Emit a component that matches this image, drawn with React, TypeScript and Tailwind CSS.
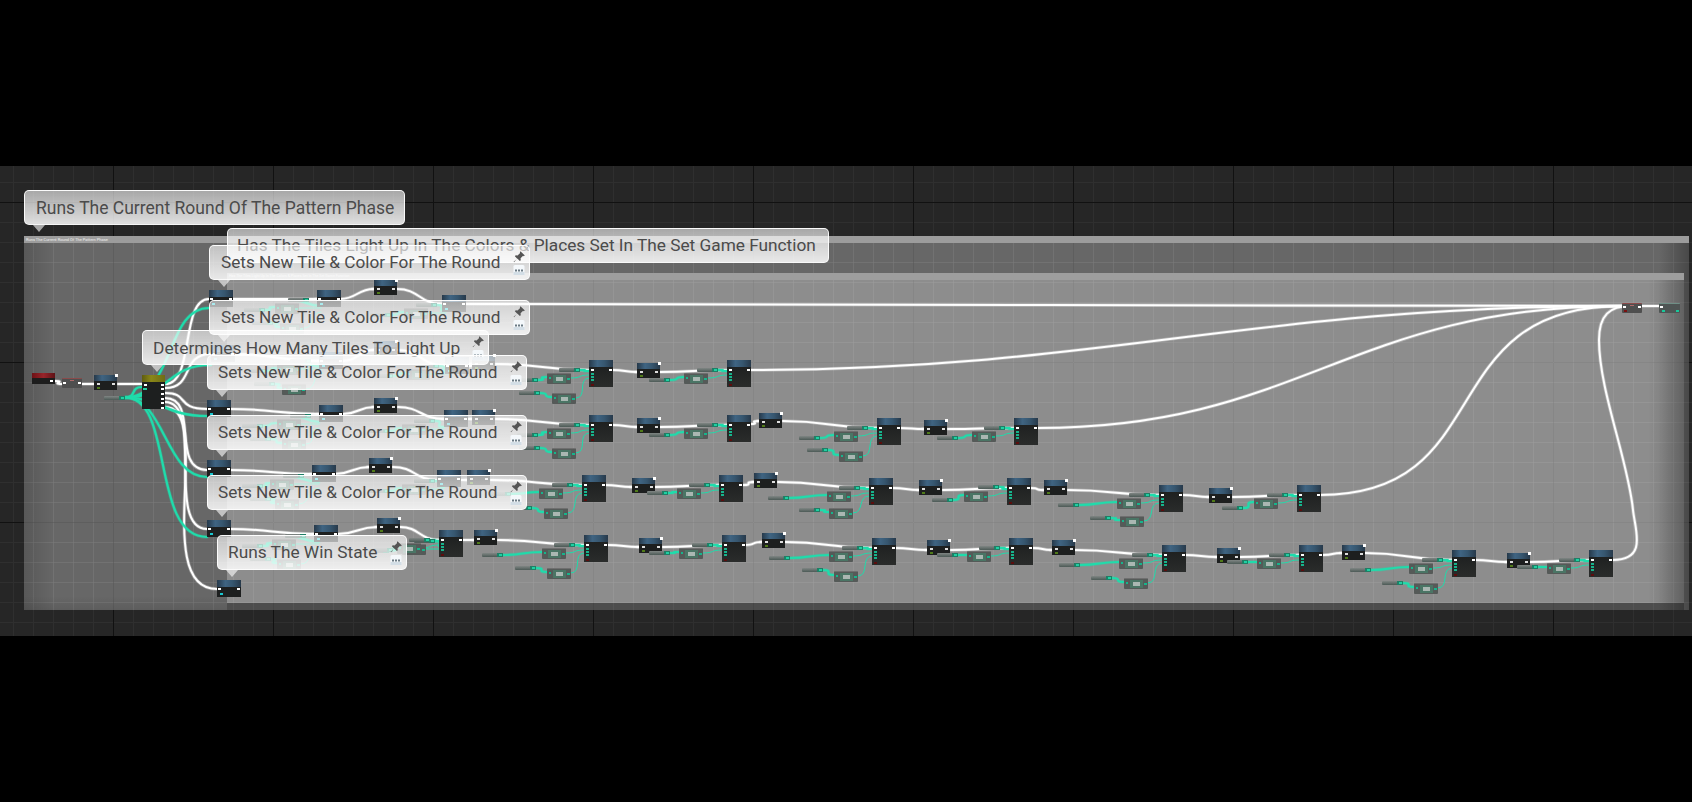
import React from "react";

const WHITE_GLOW = "#ffffff";
const TEAL = "#1fdcab";

type G3 = [number, number, number, number, number, number, number, number, number, number, number, number];
type G2 = [number, number, number, number, number, number, number, number];

const groups3: G3[] = [
  [589, 360, 547, 373, 552, 393, 559, 368, 517, 378, 519, 391],
  [589, 415, 547, 428, 552, 448, 559, 423, 517, 433, 519, 446],
  [877, 418, 834, 431, 839, 451, 847, 426, 799, 436, 807, 448],
  [582, 475, 539, 488, 544, 508, 552, 483, 490, 492, 511, 506],
  [869, 478, 827, 491, 829, 508, 839, 486, 768, 496, 799, 508],
  [1159, 485, 1117, 498, 1120, 516, 1129, 493, 1058, 503, 1090, 516],
  [439, 530, 397, 543, 397, 543, 409, 538, 372, 548, 372, 548],
  [584, 535, 542, 548, 547, 568, 554, 543, 482, 553, 515, 566],
  [872, 538, 829, 551, 834, 571, 842, 546, 769, 556, 802, 568],
  [1162, 545, 1119, 558, 1124, 578, 1132, 553, 1059, 563, 1091, 576],
  [1452, 550, 1409, 563, 1414, 583, 1422, 558, 1350, 568, 1382, 581],
];

const groups2: G2[] = [
  [727, 360, 684, 373, 697, 368, 649, 378],
  [727, 415, 684, 428, 697, 423, 649, 433],
  [1014, 418, 972, 431, 984, 426, 937, 436],
  [719, 475, 677, 488, 689, 483, 647, 491],
  [1007, 478, 964, 491, 978, 485, 932, 498],
  [1297, 485, 1254, 498, 1267, 493, 1222, 506],
  [722, 535, 679, 548, 692, 543, 649, 551],
  [1009, 538, 967, 551, 979, 546, 937, 553],
  [1299, 545, 1257, 558, 1269, 553, 1227, 560],
  [1589, 550, 1547, 563, 1559, 558, 1517, 565],
];

const mediums: [number, number][] = [
  [209, 290], [317, 290], [442, 295],
  [211, 345], [319, 352], [445, 357],
  [207, 400], [319, 405], [444, 410],
  [207, 460], [312, 465], [437, 470],
  [207, 520], [314, 525], [217, 580],
];

const smalls: [number, number][] = [
  [374, 280], [374, 341], [472, 355], [374, 398], [472, 410], [369, 458], [467, 470], [377, 518], [474, 530],
  [637, 363], [637, 418], [759, 413], [924, 420], [632, 478], [754, 473], [919, 480], [1044, 480], [1209, 488],
  [639, 538], [762, 533], [927, 540], [1052, 540], [1217, 548], [1342, 545], [1507, 553],
];

const clusters: [number, number, number][] = [
  [209, 284, 66], [211, 345, 66], [207, 400, 70], [207, 460, 63], [207, 520, 65],
];

const whiteRows: [number, number][][] = [
  [[233, 299], [317, 299], [340, 299], [374, 289], [397, 289], [442, 304], [465, 304], [1622, 306]],
  [[232, 354], [319, 361], [343, 361], [374, 350], [398, 350], [445, 366], [468, 366], [472, 364], [496, 364], [589, 370]],
  [[613, 370], [637, 372], [660, 372], [727, 370]],
  [[230, 409], [319, 414], [343, 414], [374, 407], [398, 407], [444, 419], [468, 419], [472, 419], [496, 419], [589, 425]],
  [[613, 425], [637, 427], [660, 427], [727, 425], [750, 424], [759, 421], [783, 421], [877, 428], [900, 428], [924, 429], [948, 429], [1014, 428]],
  [[230, 470], [312, 474], [335, 474], [369, 467], [393, 467], [437, 480], [460, 480], [467, 480], [491, 480], [582, 485]],
  [[605, 485], [632, 487], [655, 487], [719, 485], [743, 485], [754, 482], [778, 482], [869, 488], [893, 488], [919, 490], [943, 490], [1007, 488], [1030, 488], [1044, 490], [1068, 490], [1159, 495], [1183, 495], [1209, 497], [1233, 497], [1297, 495]],
  [[230, 529], [314, 534], [338, 534], [377, 527], [400, 527], [439, 540], [463, 540], [474, 540], [498, 540], [584, 545]],
  [[608, 545], [639, 547], [663, 547], [722, 545], [745, 545], [762, 542], [785, 542], [872, 548], [895, 548], [927, 550], [951, 550], [1009, 548], [1033, 548], [1052, 550], [1075, 550], [1162, 555], [1185, 555], [1217, 557], [1240, 557], [1299, 555], [1323, 555], [1342, 553], [1365, 553], [1452, 560], [1475, 560], [1507, 562], [1530, 562], [1589, 560]],
];

const cable = (x1: number, y1: number, x2: number, y2: number) => {
  const d = Math.max(12, Math.abs(x2 - x1) * 0.5);
  return `M${x1} ${y1}C${x1 + d} ${y1} ${x2 - d} ${y2} ${x2} ${y2}`;
};

const whitePaths: string[] = [
  cable(55, 381, 62, 384),
  cable(82, 384, 94, 384),
  cable(118, 384, 142, 384),
  "M165 384C195 384 180 299 209 299",
  "M165 388C195 388 180 354 211 354",
  "M165 393C190 393 175 409 207 409",
  "M165 398C200 398 170 470 207 470",
  "M165 402C205 402 165 529 207 529",
  "M165 407C215 407 150 589 217 589",
  "M750 370C1100 370 1250 306 1622 306",
  "M1038 428C1300 428 1350 306 1622 306",
  "M1320 495C1500 495 1430 306 1622 306",
  "M1613 560C1648 560 1635 530 1633 510C1628 460 1599 390 1599 340C1599 315 1610 306 1630 306",
  cable(1642, 306, 1659, 306),
];
whiteRows.forEach((r) => {
  for (let i = 0; i < r.length - 1; i += 2) {
    whitePaths.push(cable(r[i][0], r[i][1], r[i + 1][0], r[i + 1][1]));
    if (i + 2 < r.length) whitePaths.push(cable(r[i + 1][0] + 1, r[i + 1][1], r[i + 1][0] + 2, r[i + 1][1]));
  }
});

const thick: string[] = [
  cable(125, 397.5, 142, 387),
  "M125 397.5C175 397.5 165 308 209 308",
  "M125 397.5C170 397.5 165 365 211 365",
  "M125 397.5C160 397.5 165 416 207 416",
  "M125 397.5C165 397.5 165 477 207 477",
  "M125 397.5C175 397.5 150 537 207 537",
];
const thin: string[] = [];

groups3.forEach(([lx, ly, g1x, g1y, g2x, g2y, vtx, vty, vmx, vmy, vlx, vly]) => {
  thick.push(cable(vtx + 21, vty + 2, lx, ly + 11));
  thick.push(cable(vmx + 21, vmy + 2, g1x, g1y + 4));
  if (g1y !== g2y) {
    thick.push(cable(vlx + 21, vly + 2, g2x, g2y + 4));
    thin.push(cable(g2x + 24, g2y + 5, lx, ly + 18));
  }
  thin.push(cable(g1x + 24, g1y + 5, lx, ly + 15));
});
groups2.forEach(([lx, ly, gx, gy, vtx, vty, vmx, vmy]) => {
  thick.push(cable(vtx + 21, vty + 2, lx, ly + 11));
  thick.push(cable(vmx + 21, vmy + 2, gx, gy + 4));
  thin.push(cable(gx + 24, gy + 5, lx, ly + 15));
});
clusters.forEach(([bx, by, dx]) => {
  thick.push(cable(bx + dx + 17, by + 16, bx + 112, by + 22));
  thick.push(cable(bx + 56, by + 26, bx + dx, by + 23));
  thick.push(cable(bx + 64, by + 39, bx + dx + 5, by + 43));
  thin.push(cable(bx + dx + 24, by + 24, bx + 112, by + 24));
  thin.push(cable(bx + dx + 29, by + 44, bx + 112, by + 28));
  thick.push(cable(bx + 182, by + 31, bx + 195, by + 28));
  thick.push(cable(bx + 228, by + 21, bx + 237, by + 27));
  thin.push(cable(bx + 219, by + 29, bx + 237, by + 29));
});

const HEADER = "bg-[linear-gradient(90deg,#26394a,#3f6482_35%,#36566f_65%,#27394a)]";

function Pin({ l, t, c = "bg-white" }: { l: number; t: number; c?: string }) {
  return <span className={`absolute h-[2px] w-[2.5px] ${c}`} style={{ left: l, top: t }} />;
}

function Big({ x, y }: { x: number; y: number }) {
  return (
    <div className="absolute h-[27px] w-[24px] bg-[linear-gradient(180deg,#1b1d1d,#2a2c2b)]" style={{ left: x, top: y }}>
      <div className={`h-[7px] ${HEADER}`} />
      <Pin l={2} t={9} />
      <Pin l={20} t={9} />
      <Pin l={2} t={13} c="bg-[#17b48c]" />
      <Pin l={2} t={16} c="bg-[#17b48c]" />
      <Pin l={2} t={19} c="bg-[#17b48c]" />
      <Pin l={2} t={24} c="bg-[#5c0d0d]" />
    </div>
  );
}

function Medium({ x, y }: { x: number; y: number }) {
  return (
    <div className="absolute h-[17px] w-[24px] bg-[#1d1f1f]" style={{ left: x, top: y }}>
      <div className={`h-[7px] ${HEADER}`} />
      <Pin l={1} t={8} />
      <Pin l={20} t={8} />
      <Pin l={3} t={13} c="bg-[#19c8d0]" />
    </div>
  );
}

function Small({ x, y }: { x: number; y: number }) {
  return (
    <div className="absolute h-[15px] w-[23px] bg-[#1d1f1f]" style={{ left: x, top: y }}>
      <div className={`h-[6px] ${HEADER}`} />
      <span className="absolute right-[-1px] top-[-1px] h-[3px] w-[3px] bg-white" />
      <Pin l={3} t={8} c="bg-[#dddddd]" />
      <Pin l={18} t={8} c="bg-[#dddddd]" />
      <Pin l={3} t={12} c="bg-[#4f7a18]" />
    </div>
  );
}

function Grey({ x, y }: { x: number; y: number }) {
  return (
    <div
      className="absolute flex h-[11px] w-[24px] items-center justify-center rounded-[1px] border-t border-[#6f6f6f] bg-[#555a58]"
      style={{ left: x, top: y }}
    >
      <Pin l={1.5} t={2.5} c="bg-[#17b48c]" />
      <Pin l={20} t={4} c="bg-[#17b48c]" />
      <div className="flex h-[8px] w-[13px] items-center justify-center bg-[#4a7565]">
        <div className="h-[3.5px] w-[7px] bg-[#aab7b2]" />
      </div>
    </div>
  );
}

function Var({ x, y }: { x: number; y: number }) {
  return (
    <div
      className="absolute h-[4px] w-[21px] rounded-[1px] bg-[linear-gradient(180deg,#808684,#4c5a56)]"
      style={{ left: x, top: y }}
    >
      <span className="absolute right-0 top-0 h-[4px] w-[6px] bg-[#1f7f66]" />
      <span className="absolute right-[1px] top-[1px] h-[2px] w-[3px] bg-[#1fd0a2]" />
    </div>
  );
}

function PinIcon() {
  return (
    <svg width="14" height="14" viewBox="0 0 24 24" className="absolute right-[3px] top-[4px]">
      <path
        d="M14.5 2 22 9.5l-2 1-1-.5-4.3 4.3.3 3.2-1.5 1.5L9 14.7 3.5 21 2.8 20.3 9 14.8 4.9 10.5 6.4 9l3.2.3L13.9 5l-.4-1z"
        fill="#555555"
      />
    </svg>
  );
}

function BoxIcon() {
  return (
    <svg width="12" height="10" viewBox="0 0 12 10" className="absolute bottom-[4px] right-[4px]">
      <rect x="0.5" y="0" width="11" height="10" rx="1.5" fill="#f4f8fb" />
      <rect x="0.5" y="7" width="11" height="3" fill="#d3dee6" />
      <rect x="2" y="4.5" width="2" height="2" fill="#6b7a84" />
      <rect x="5" y="4.5" width="2" height="2" fill="#6b7a84" />
      <rect x="8" y="4.5" width="2" height="2" fill="#6b7a84" />
    </svg>
  );
}

function Bubble({
  x,
  y,
  w,
  text,
  icons = true,
  type = "text-[17.2px] pl-[10px]",
}: {
  x: number;
  y: number;
  w: number;
  text: string;
  icons?: boolean;
  type?: string;
}) {
  return (
    <div className="absolute" style={{ left: x, top: y, width: w }}>
      <div className={`relative flex h-[35px] items-center rounded-[5px] border border-white/90 bg-gradient-to-b from-white/60 to-white/85 pt-[1px] font-['Roboto',sans-serif] whitespace-nowrap text-[#4b4b4b] ${type}`}>
        {text}
        {icons && <PinIcon />}
        {icons && <BoxIcon />}
      </div>
      <div className="absolute left-[9px] top-[35px] h-[7px] w-[12px] bg-white/60 [clip-path:polygon(0_0,100%_0,50%_100%)]" />
    </div>
  );
}

export default function App() {
  return (
    <div className="flex h-[802px] w-[1692px] flex-col overflow-hidden bg-black">
      <div className="h-[166px]" />
      <div className="relative h-[470px] overflow-hidden bg-[#262626] bg-[linear-gradient(to_right,#111111_1px,transparent_1px),linear-gradient(to_bottom,#111111_1px,transparent_1px),linear-gradient(to_right,#2f2f2f_1px,transparent_1px),linear-gradient(to_bottom,#2f2f2f_1px,transparent_1px)] bg-[size:160px_160px,160px_160px,20px_20px,20px_20px] bg-[position:113px_0,0_36px,13px_0,0_16px]">
        <div className="absolute left-0 top-[-166px] h-[802px] w-[1692px]">
          {/* outer comment */}
          <div className="absolute left-[24px] top-[236px] h-[374px] w-[1665px] bg-white/30 bg-[linear-gradient(to_right,rgba(255,255,255,0.035)_1px,transparent_1px),linear-gradient(to_bottom,rgba(255,255,255,0.035)_1px,transparent_1px)] bg-[size:20px_20px] bg-[position:9px_6px]">
            <div className="h-[7px] bg-[#9c9c9c] pl-[2px] font-['Roboto',sans-serif] text-[4px] leading-[7px] whitespace-nowrap text-white/80">
              Runs The Current Round Of The Pattern Phase
            </div>
            <div className="absolute bottom-0 left-0 top-[7px] w-[30px] bg-gradient-to-r from-black/15 to-transparent" />
            <div className="absolute bottom-0 left-0 h-[14px] w-[203px] bg-gradient-to-t from-black/10 to-transparent" />
            <div className="absolute bottom-0 right-0 top-[7px] w-[30px] bg-gradient-to-l from-black/30 to-transparent" />
          </div>
          {/* inner comment */}
          <div className="absolute left-[227px] top-[273px] h-[330px] w-[1457px] bg-white/25">
            <div className="h-[7px] bg-[#9e9e9e] pl-[2px] font-['Roboto',sans-serif] text-[3.6px] leading-[7px] whitespace-nowrap text-white/70">
              Has The Tiles Light Up In The Colors &amp; Places Set In The Set Game Function
            </div>
            <div className="absolute bottom-0 right-0 top-[7px] w-[36px] bg-gradient-to-l from-black/20 to-transparent" />
          </div>
          <div className="absolute bottom-[192px] left-[227px] h-[7px] w-[1457px] bg-black/25" />

          <svg className="absolute left-0 top-0" width="1692" height="802" fill="none" strokeLinecap="round">
            <g stroke={WHITE_GLOW}>
              {whitePaths.map((d, i) => (
                <path key={i} d={d} strokeWidth="3.6" opacity="0.3" />
              ))}
              {whitePaths.map((d, i) => (
                <path key={i} d={d} strokeWidth="2" />
              ))}
            </g>
            <g stroke={TEAL}>
              {thick.map((d, i) => (
                <path key={i} d={d} strokeWidth="3.6" opacity="0.3" />
              ))}
              {thick.map((d, i) => (
                <path key={i} d={d} strokeWidth="2.2" />
              ))}
              {thin.map((d, i) => (
                <path key={i} d={d} strokeWidth="1" />
              ))}
            </g>
          </svg>

          {/* event + start */}
          <div className="absolute left-[32px] top-[373px] h-[11px] w-[23px] bg-[#1d1d1d]">
            <div className="h-[5px] bg-[linear-gradient(90deg,#6e1216,#98242a_50%,#5e1216)]" />
            <Pin l={18} t={6.5} />
          </div>
          <div className="absolute left-[62px] top-[378px] h-[10px] w-[20px] rounded-[1px] border-t border-[#8a4a4a] bg-[#4f4f4f]">
            <Pin l={1} t={3} />
            <Pin l={16} t={3} />
            <span className="absolute left-[8px] top-[1px] h-[1px] w-[4px] bg-[#b06a6a]" />
          </div>
          <Small x={94} y={375} />
          <Var x={104} y={396} />
          <div className="absolute left-[142px] top-[375px] h-[34px] w-[23px] bg-[#1d1f1f]">
            <div className="h-[7px] bg-[linear-gradient(90deg,#5f5c10,#8a8718_40%,#6e6c14)]" />
            {[9, 13, 18, 23, 27, 32].map((t) => (
              <Pin key={t} l={19} t={t} />
            ))}
            <Pin l={2} t={9} />
            <span className="absolute left-[1px] top-[13px] h-[1.5px] w-[4px] bg-[#1fd0a2]" />
          </div>

          {clusters.map(([bx, by, dx]) => (
            <React.Fragment key={by}>
              <Grey x={bx + dx} y={by + 19} />
              <Grey x={bx + dx + 5} y={by + 39} />
              <Var x={bx + dx + 13} y={by + 14} />
              <Var x={bx + 35} y={by + 24} />
              <Var x={bx + 43} y={by + 37} />
              <Grey x={bx + 195} y={by + 24} />
              <Var x={bx + 207} y={by + 19} />
              <Var x={bx + 161} y={by + 29} />
            </React.Fragment>
          ))}

          {mediums.map(([x, y]) => (
            <Medium key={`${x}-${y}`} x={x} y={y} />
          ))}
          {smalls.map(([x, y]) => (
            <Small key={`${x}-${y}`} x={x} y={y} />
          ))}
          {groups3.map((g) => (
            <React.Fragment key={`${g[0]}-${g[1]}`}>
              <Big x={g[0]} y={g[1]} />
              <Grey x={g[2]} y={g[3]} />
              {g[3] !== g[5] && <Grey x={g[4]} y={g[5]} />}
              <Var x={g[6]} y={g[7]} />
              <Var x={g[8]} y={g[9]} />
              {g[9] !== g[11] && <Var x={g[10]} y={g[11]} />}
            </React.Fragment>
          ))}
          {groups2.map((g) => (
            <React.Fragment key={`${g[0]}-${g[1]}`}>
              <Big x={g[0]} y={g[1]} />
              <Grey x={g[2]} y={g[3]} />
              <Var x={g[4]} y={g[5]} />
              <Var x={g[6]} y={g[7]} />
            </React.Fragment>
          ))}

          {/* end nodes */}
          <div className="absolute left-[1622px] top-[303px] h-[10px] w-[20px] rounded-[1px] border-t border-[#8a4a4a] bg-[#4f4f4f]">
            <Pin l={1} t={2} />
            <Pin l={16} t={2} />
            <Pin l={2} t={6} c="bg-[#7a1010]" />
            <span className="absolute left-[8px] top-[1px] h-[1px] w-[4px] bg-[#b06a6a]" />
          </div>
          <div className="absolute left-[1659px] top-[303px] h-[10px] w-[21px] rounded-[1px] border-t border-[#6f8f86] bg-[#4f5554]">
            <Pin l={1} t={2} />
            <Pin l={3} t={6} c="bg-[#19c89b]" />
            <Pin l={17} t={6} c="bg-[#19c89b]" />
          </div>

          <Bubble x={24} y={190} w={381} text="Runs The Current Round Of The Pattern Phase" icons={false} type="text-[17.5px] pl-[11px]" />
          <Bubble x={227} y={228} w={602} text="Has The Tiles Light Up In The Colors & Places Set In The Set Game Function" icons={false} type="text-[17.25px] pl-[9px]" />
          <Bubble x={209} y={245} w={321} text="Sets New Tile & Color For The Round" type="text-[17.2px] pl-[11px]" />
          <Bubble x={209} y={300} w={321} text="Sets New Tile & Color For The Round" type="text-[17.2px] pl-[11px]" />
          <Bubble x={142} y={330} w={347} text="Determines How Many Tiles To Light Up" type="text-[17.35px] pl-[10px]" />
          <Bubble x={207} y={355} w={320} text="Sets New Tile & Color For The Round" />
          <Bubble x={207} y={415} w={320} text="Sets New Tile & Color For The Round" />
          <Bubble x={207} y={475} w={320} text="Sets New Tile & Color For The Round" />
          <Bubble x={217} y={535} w={190} text="Runs The Win State" type="text-[17.3px] pl-[10px]" />
        </div>
      </div>
      <div className="flex-1" />
    </div>
  );
}
